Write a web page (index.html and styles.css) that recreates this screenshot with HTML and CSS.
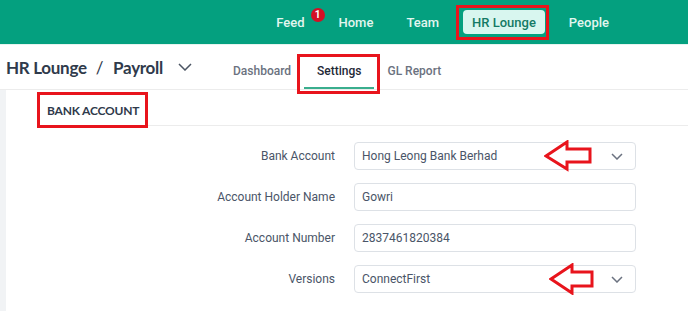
FILE: index.html
```html
<!DOCTYPE html>
<html lang="en">
  <head>
    <meta charset="UTF-8" />
    <meta name="viewport" content="width=device-width, initial-scale=1.0" />
    <title>HR Lounge - Payroll Settings</title>
    <link rel="stylesheet" href="styles.css">
  </head>
  <body>
    <div class="page">
      <header class="topbar">
        <nav class="topnav">
          <a class="nav-link feed">Feed<span class="badge">1</span></a>
          <a class="nav-link">Home</a>
          <a class="nav-link">Team</a>
          <a class="nav-link active">HR Lounge</a>
          <a class="nav-link">People</a>
        </nav>
      </header>

      <div class="subbar">
        <div class="crumbs">
          <span>HR Lounge</span>
          <span class="slash">/</span>
          <span>Payroll</span>
          <svg class="crumb-chevron" width="14" height="8" viewBox="0 0 14 8">
            <path d="M1 1l6 6 6-6" fill="none" stroke="#4b5563" stroke-width="1.5" />
          </svg>
        </div>
        <div class="tabs">
          <a class="tab">Dashboard</a>
          <a class="tab selected">Settings</a>
          <a class="tab">GL Report</a>
        </div>
      </div>

      <div class="main">
        <div class="strip"></div>
        <div class="content">
          <div class="section-title">BANK ACCOUNT</div>
          <form class="form">
            <label>Bank Account</label>
            <div class="field select">
              <span>Hong Leong Bank Berhad</span>
              <svg width="12" height="7" viewBox="0 0 12 7"><path d="M1 1l5 5 5-5" fill="none" stroke="#6b7280" stroke-width="1.5" /></svg>
            </div>

            <label>Account Holder Name</label>
            <div class="field"><span>Gowri</span></div>

            <label>Account Number</label>
            <div class="field"><span>2837461820384</span></div>

            <label>Versions</label>
            <div class="field select">
              <span>ConnectFirst</span>
              <svg width="12" height="7" viewBox="0 0 12 7"><path d="M1 1l5 5 5-5" fill="none" stroke="#6b7280" stroke-width="1.5" /></svg>
            </div>
          </form>
        </div>
      </div>

      <!-- annotations drawn over the screenshot -->
      <div class="mark mark-nav"></div>
      <div class="mark mark-tab"></div>
      <div class="mark mark-section"></div>
      <svg class="arrow arrow-bank" width="50" height="32" viewBox="0 0 50 32">
        <polygon points="2,16 23,2 23,9 46,9 46,22 23,22 23,29" fill="none" stroke="#e8141c" stroke-width="3" stroke-linejoin="miter" />
      </svg>
      <svg class="arrow arrow-version" width="50" height="32" viewBox="0 0 50 32">
        <polygon points="2,16 23,2 23,9 43,9 43,23 23,23 23,30" fill="none" stroke="#e8141c" stroke-width="3" stroke-linejoin="miter" />
      </svg>
    </div>
  </body>
</html>
```

FILE: styles.css
```css
body {
  margin: 0;
  font-family: Roboto, "Liberation Sans", sans-serif;
  background: #fff;
}
.page {
  position: relative;
  width: 688px;
  height: 311px;
  overflow: hidden;
}
.topbar {
  height: 44px;
  background: #04a07f;
  display: flex;
  justify-content: flex-end;
  align-items: center;
  padding-right: 68px;
  border-bottom: 1px solid #e6f4ef;
}
.topnav {
  display: flex;
  align-items: center;
  gap: 11px;
}
.nav-link {
  position: relative;
  padding: 0 11px;
  height: 24px;
  line-height: 25px;
  font-size: 13px;
  font-weight: 500;
  color: #e2f6ef;
  border-radius: 4px;
}
.nav-link.active {
  padding: 0 9px;
  margin: 0 2px;
  background: #d8f6ef;
  color: #137a65;
}
.badge {
  position: absolute;
  top: -2px;
  right: -8px;
  width: 14px;
  height: 14px;
  border-radius: 50%;
  background: #d40f25;
  color: #fff;
  font-size: 10px;
  font-weight: 700;
  line-height: 14px;
  text-align: center;
}
.feed {
  padding-right: 12px;
}
.subbar {
  height: 44px;
  display: flex;
  align-items: center;
  border-bottom: 1px solid #ececec;
}
.crumbs {
  display: flex;
  align-items: center;
  flex: none;
  width: 214px;
  padding-left: 6px;
  white-space: nowrap;
  font-family: Lato, "Open Sans", sans-serif;
  font-size: 17px;
  font-weight: 700;
  letter-spacing: -0.3px;
  color: #2f3a4b;
}
.slash {
  margin: 0 10px 0 9px;
  font-weight: 400;
}
.crumb-chevron {
  margin-left: 15px;
}
.tabs {
  display: flex;
  height: 44px;
}
.tab {
  display: flex;
  align-items: center;
  padding: 10px 13px 0;
  font-size: 12px;
  font-weight: 500;
  color: #6b7280;
  border-bottom: 2px solid transparent;
  box-sizing: border-box;
}
.tab.selected {
  color: #1f2937;
  border-bottom-color: #3aae8e;
}
.main {
  display: flex;
  height: 222px;
}
.strip {
  width: 6px;
  background: #f1f3f5;
}
.content {
  flex: 1;
  padding-left: 31px;
}
.section-title {
  height: 35px;
  line-height: 41px;
  padding-left: 10px;
  font-family: Lato, "Open Sans", sans-serif;
  font-size: 12px;
  font-weight: 700;
  letter-spacing: -0.2px;
  color: #2f3a4b;
  border-bottom: 1px solid #ececec;
}
.form {
  display: grid;
  grid-template-columns: 298px 282px;
  column-gap: 19px;
  row-gap: 13px;
  margin-top: 16px;
  align-items: center;
}
.form label {
  text-align: right;
  font-size: 12px;
  color: #4a5568;
}
.field {
  height: 28px;
  box-sizing: border-box;
  border: 1px solid #dde1e6;
  border-radius: 4px;
  display: flex;
  align-items: center;
  justify-content: space-between;
  padding: 0 12px 0 7px;
  font-size: 12px;
  color: #4a5568;
}
.mark {
  position: absolute;
  border: 3px solid #e8141c;
  box-sizing: border-box;
}
.mark-nav {
  left: 456px;
  top: 5px;
  width: 93px;
  height: 35px;
}
.mark-tab {
  left: 297px;
  top: 54px;
  width: 83px;
  height: 40px;
}
.mark-section {
  left: 37px;
  top: 92px;
  width: 111px;
  height: 36px;
}
.arrow {
  position: absolute;
}
.arrow-bank {
  left: 544px;
  top: 140px;
}
.arrow-version {
  left: 549px;
  top: 263px;
}
```
